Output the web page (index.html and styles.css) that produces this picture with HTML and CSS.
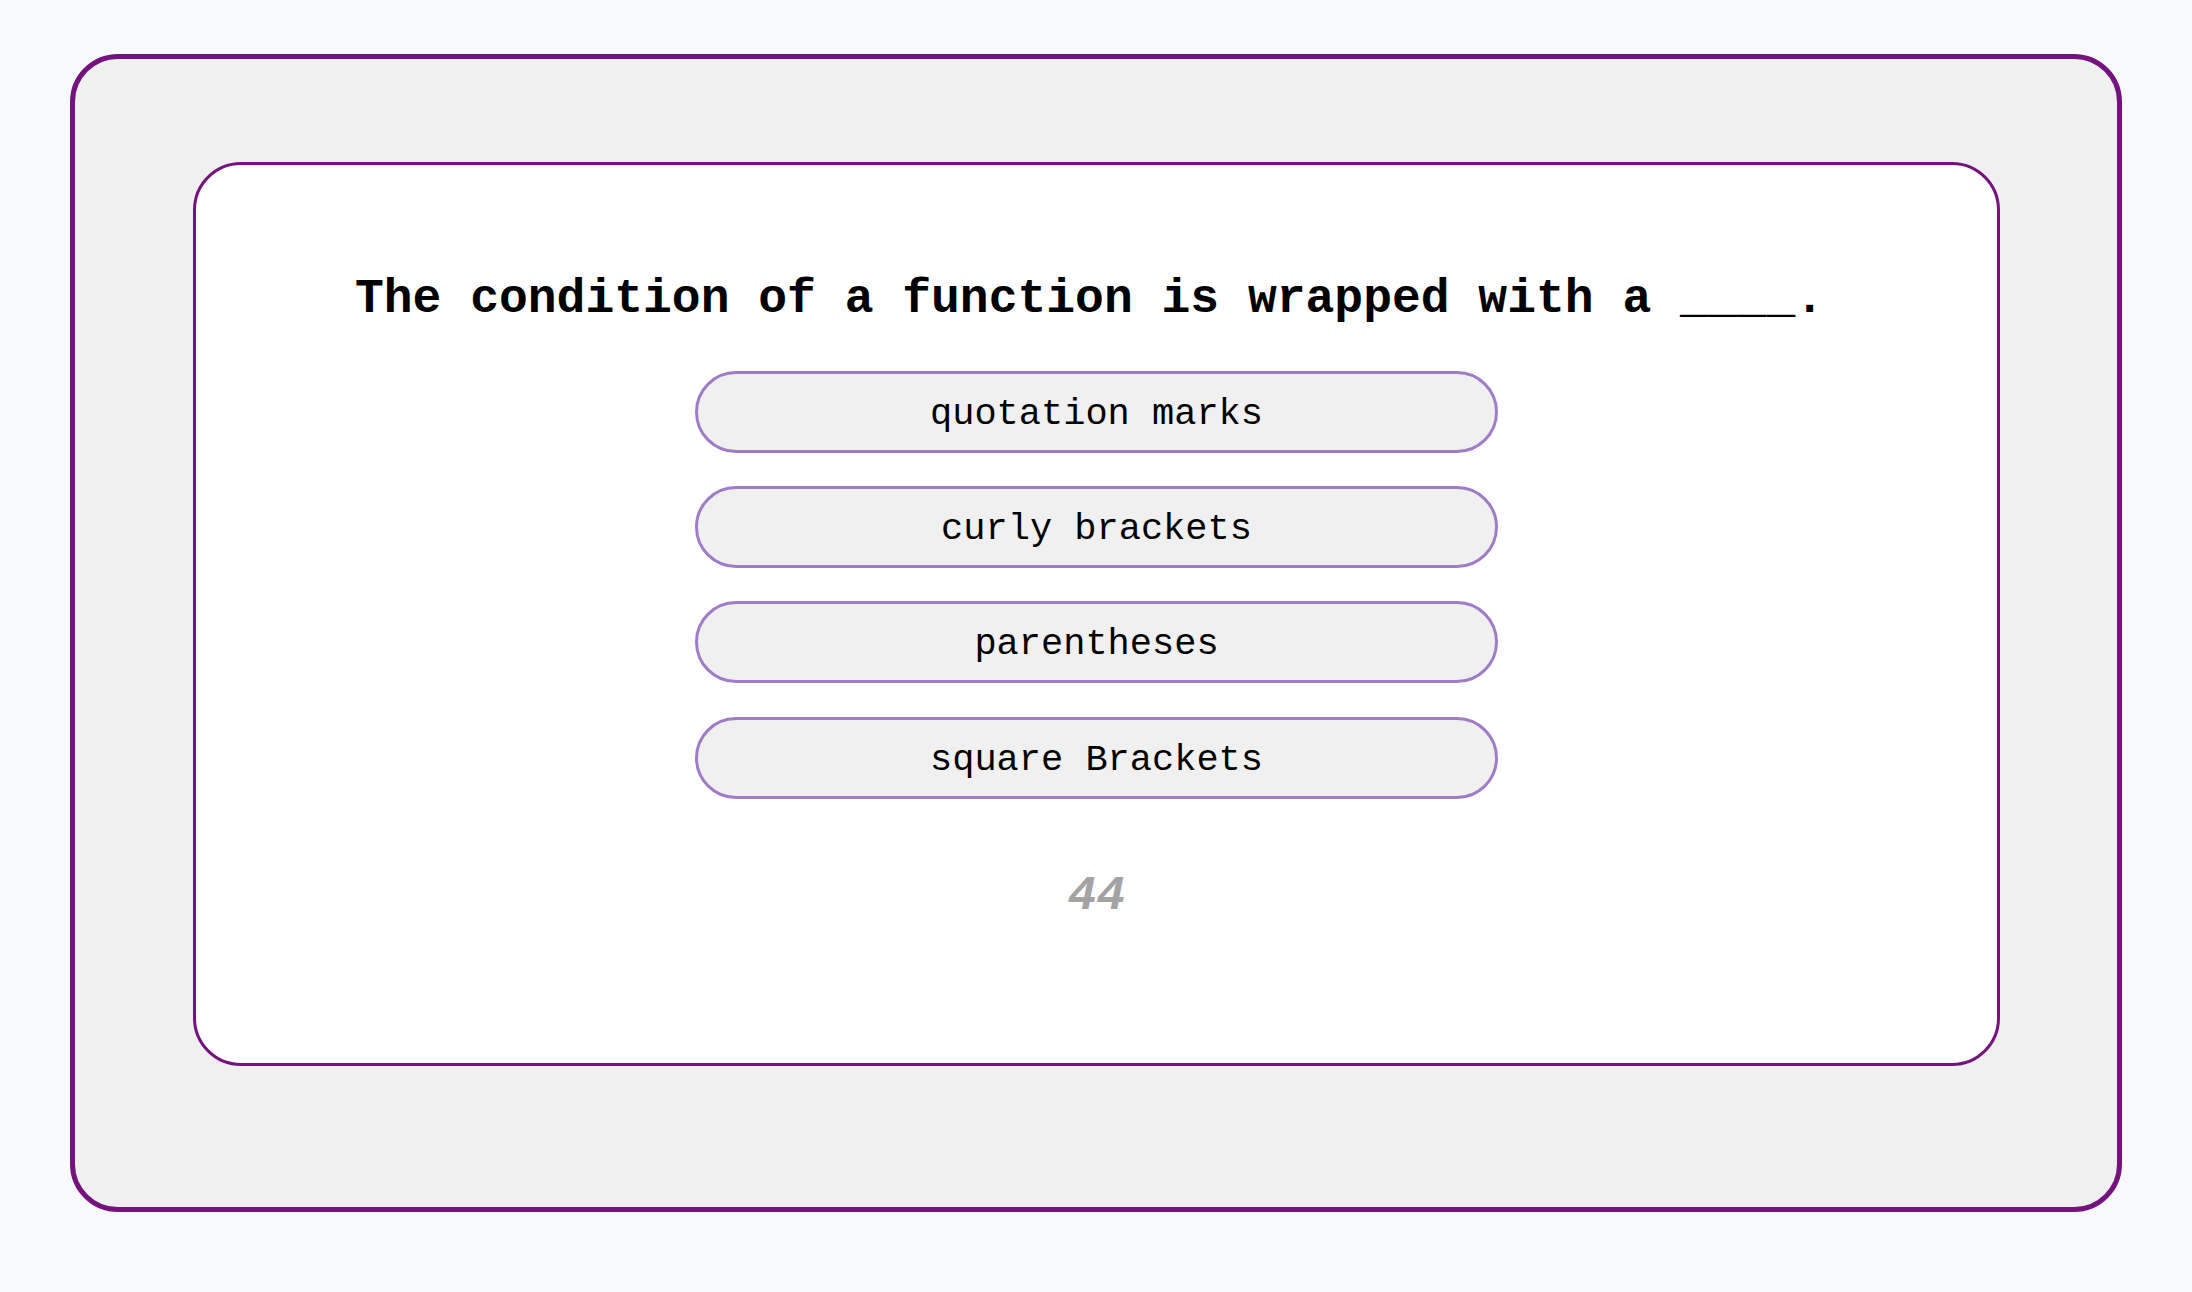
FILE: index.html
```html
<!DOCTYPE html>
<html lang="en">
<head>
<meta charset="utf-8">
<title>Quiz</title>
<link rel="stylesheet" href="styles.css">
</head>
<body>
  <main class="frame">
    <section class="card">
      <h1 class="question">The condition of a function is wrapped with a ____.</h1>
      <div class="answers">
        <button class="answer">quotation marks</button>
        <button class="answer">curly brackets</button>
        <button class="answer">parentheses</button>
        <button class="answer">square Brackets</button>
      </div>
      <div class="timer">44</div>
    </section>
  </main>
</body>
</html>
```

FILE: styles.css
```css
html, body {
  margin: 0;
  padding: 0;
}

body {
  background: #f8f9fb;
  padding: 54px 70px;
  font-family: "Courier New", "Nimbus Mono PS", "FreeMono", "Liberation Mono", monospace;
}

.frame {
  box-sizing: border-box;
  width: 2052px;
  height: 1158px;
  border: 5px solid #74137e;
  border-radius: 48px;
  background: #f0f0f0;
  padding: 103px 117px 0 118px;
}

.card {
  box-sizing: border-box;
  height: 904px;
  border: 3px solid #74137e;
  border-radius: 48px;
  background: #ffffff;
  display: flex;
  flex-direction: column;
  align-items: center;
}

.question {
  margin: 106.6px 0 0 0;
  padding-right: 14px;
  font-size: 48px;
  line-height: normal;
  font-weight: bold;
  color: #000;
  white-space: nowrap;
}

.answers {
  margin-top: 45.2px;
  display: flex;
  flex-direction: column;
  gap: 33.3px;
}

.answer {
  box-sizing: border-box;
  width: 803px;
  height: 82px;
  border: 3px solid #a07cc8;
  border-radius: 41px;
  background: #f0f0f0;
  font-family: "Courier New", "Nimbus Mono PS", "FreeMono", "Liberation Mono", monospace;
  font-size: 37px;
  line-height: normal;
  color: #000;
  padding: 4px 0 0 0;
  cursor: pointer;
}

.timer {
  margin-top: 70px;
  font-size: 48px;
  line-height: normal;
  font-weight: bold;
  font-style: italic;
  color: #a3a3a3;
}
```
